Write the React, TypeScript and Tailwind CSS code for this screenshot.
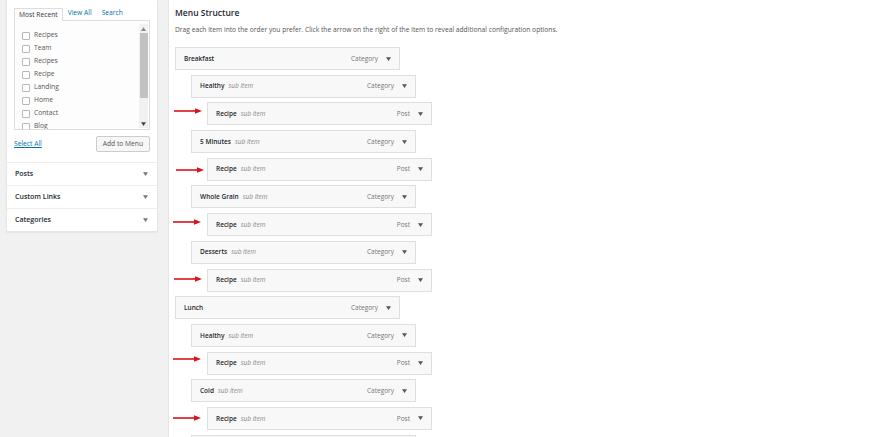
import React from "react";

const PAGES = ["Recipes", "Team", "Recipes", "Recipe", "Landing", "Home", "Contact", "Blog"];

const SECTIONS = ["Posts", "Custom Links", "Categories"];

type Item = {
  title: string;
  depth: number;
  type: string;
  sub?: boolean;
  arrow?: string;
};

const ITEMS: Item[] = [
  { title: "Breakfast", depth: 0, type: "Category" },
  { title: "Healthy", depth: 1, type: "Category", sub: true },
  { title: "Recipe", depth: 2, type: "Post", sub: true, arrow: "top-[5px] left-[-34px]" },
  { title: "5 Minutes", depth: 1, type: "Category", sub: true },
  { title: "Recipe", depth: 2, type: "Post", sub: true, arrow: "top-[8px] left-[-32px]" },
  { title: "Whole Grain", depth: 1, type: "Category", sub: true },
  { title: "Recipe", depth: 2, type: "Post", sub: true, arrow: "top-[5px] left-[-35px]" },
  { title: "Desserts", depth: 1, type: "Category", sub: true },
  { title: "Recipe", depth: 2, type: "Post", sub: true, arrow: "top-[6px] left-[-34px]" },
  { title: "Lunch", depth: 0, type: "Category" },
  { title: "Healthy", depth: 1, type: "Category", sub: true },
  { title: "Recipe", depth: 2, type: "Post", sub: true, arrow: "top-[3px] left-[-35px]" },
  { title: "Cold", depth: 1, type: "Category", sub: true },
  { title: "Recipe", depth: 2, type: "Post", sub: true, arrow: "top-[7px] left-[-35px]" },
  { title: "Soups", depth: 1, type: "Category", sub: true },
];

const INDENT = ["ml-0", "ml-[16px]", "ml-[32px]"];

function Caret({ className = "" }: { className?: string }) {
  return (
    <svg viewBox="0 0 8 6" className={`w-[5px] h-[4px] ${className}`} fill="currentColor" aria-hidden>
      <path d="M0 0h8L4 6z" />
    </svg>
  );
}

function RedArrow() {
  return (
    <svg width="28" height="6" viewBox="0 0 28 6" aria-hidden>
      <path d="M0 3h23" stroke="#d8141c" strokeWidth="1.6" />
      <path d="M21 0.3L28 3l-7 2.7z" fill="#d8141c" />
    </svg>
  );
}

export default function App() {
  return (
    <div className="flex h-[437px] w-[880px] overflow-hidden bg-[#f1f1f1] font-['Open_Sans',sans-serif] text-[#23282d]">
      {/* left accordion */}
      <aside className="ml-[6px] w-[152px] self-start bg-white border-x border-b border-[#e5e5e5] shadow-[0_1px_1px_rgba(0,0,0,0.04)]">
        <div className="h-[162px] px-[7px] pt-[7px]">
          <div className="flex items-end text-[6.7px] leading-none">
            <span className="relative z-10 -mb-px h-[13px] flex items-center px-[4px] border border-b-0 border-[#ddd] bg-[#fdfdfd] text-[#32373c]">
              Most Recent
            </span>
            <span className="h-[13px] flex items-center pl-[5px] text-[#0073aa]">View All</span>
            <span className="h-[13px] flex items-center pl-[10px] text-[#0073aa]">Search</span>
          </div>
          <div className="flex h-[110px] border border-[#ddd] bg-[#fdfdfd]">
            <ul className="flex-1 overflow-hidden pt-[8px] pl-[7px]">
              {PAGES.map((p, i) => (
                <li key={i} className="flex h-[13px] items-center gap-[4px] text-[6.7px] text-[#555]">
                  <span className="h-[8px] w-[8px] shrink-0 border border-[#b4b9be] bg-white rounded-[1px]" />
                  {p}
                </li>
              ))}
            </ul>
            <div className="mr-[1px] mt-[3px] mb-[1px] flex w-[9px] flex-col items-center bg-[#f1f1f1]">
              <div className="flex h-[9px] items-center text-[#888]">
                <Caret className="rotate-180" />
              </div>
              <div className="h-[65px] w-[8px] bg-[#c1c1c1]" />
              <div className="flex-1" />
              <div className="flex h-[9px] items-center text-[#444]">
                <Caret />
              </div>
            </div>
          </div>
          <div className="mt-[6px] flex items-center justify-between">
            <span className="text-[6.7px] text-[#0073aa] underline">Select All</span>
            <span className="flex h-[16px] items-center rounded-[2px] border border-[#ccc] bg-[#f7f7f7] px-[6px] text-[6.7px] text-[#555]">
              Add to Menu
            </span>
          </div>
        </div>
        {SECTIONS.map((s) => (
          <div
            key={s}
            className="flex h-[23px] items-center justify-between border-t border-[#eee] pl-[8px] pr-[9px] text-[7px] font-semibold"
          >
            {s}
            <Caret className="text-[#777]" />
          </div>
        ))}
      </aside>

      {/* menu structure */}
      <main className="ml-[10px] flex-1 border-l border-[#e5e5e5] bg-white px-[6px] pt-[6px]">
        <h2 className="text-[8.5px] font-semibold leading-[14px]">Menu Structure</h2>
        <p className="mt-[5px] text-[6.7px] leading-[10px] text-[#555]">
          Drag each item into the order you prefer. Click the arrow on the right of the item to reveal additional
          configuration options.
        </p>
        <ul className="mt-[12px] flex flex-col gap-[4.7px]">
          {ITEMS.map((it, i) => (
            <li
              key={i}
              className={`relative flex h-[23px] w-[225px] shrink-0 items-center border border-[#dfdfdf] bg-[#f8f8f8] pl-[8px] pr-[8px] ${INDENT[it.depth]}`}
            >
              {it.arrow && (
                <span className={`absolute ${it.arrow}`}>
                  <RedArrow />
                </span>
              )}
              <span className="text-[6.5px] font-semibold">{it.title}</span>
              {it.sub && <span className="ml-[4px] text-[6.5px] italic text-[#888]">sub item</span>}
              <span className="ml-auto text-[6.5px] text-[#777]">{it.type}</span>
              <Caret className="ml-[8px] text-[#555]" />
            </li>
          ))}
        </ul>
      </main>
    </div>
  );
}
